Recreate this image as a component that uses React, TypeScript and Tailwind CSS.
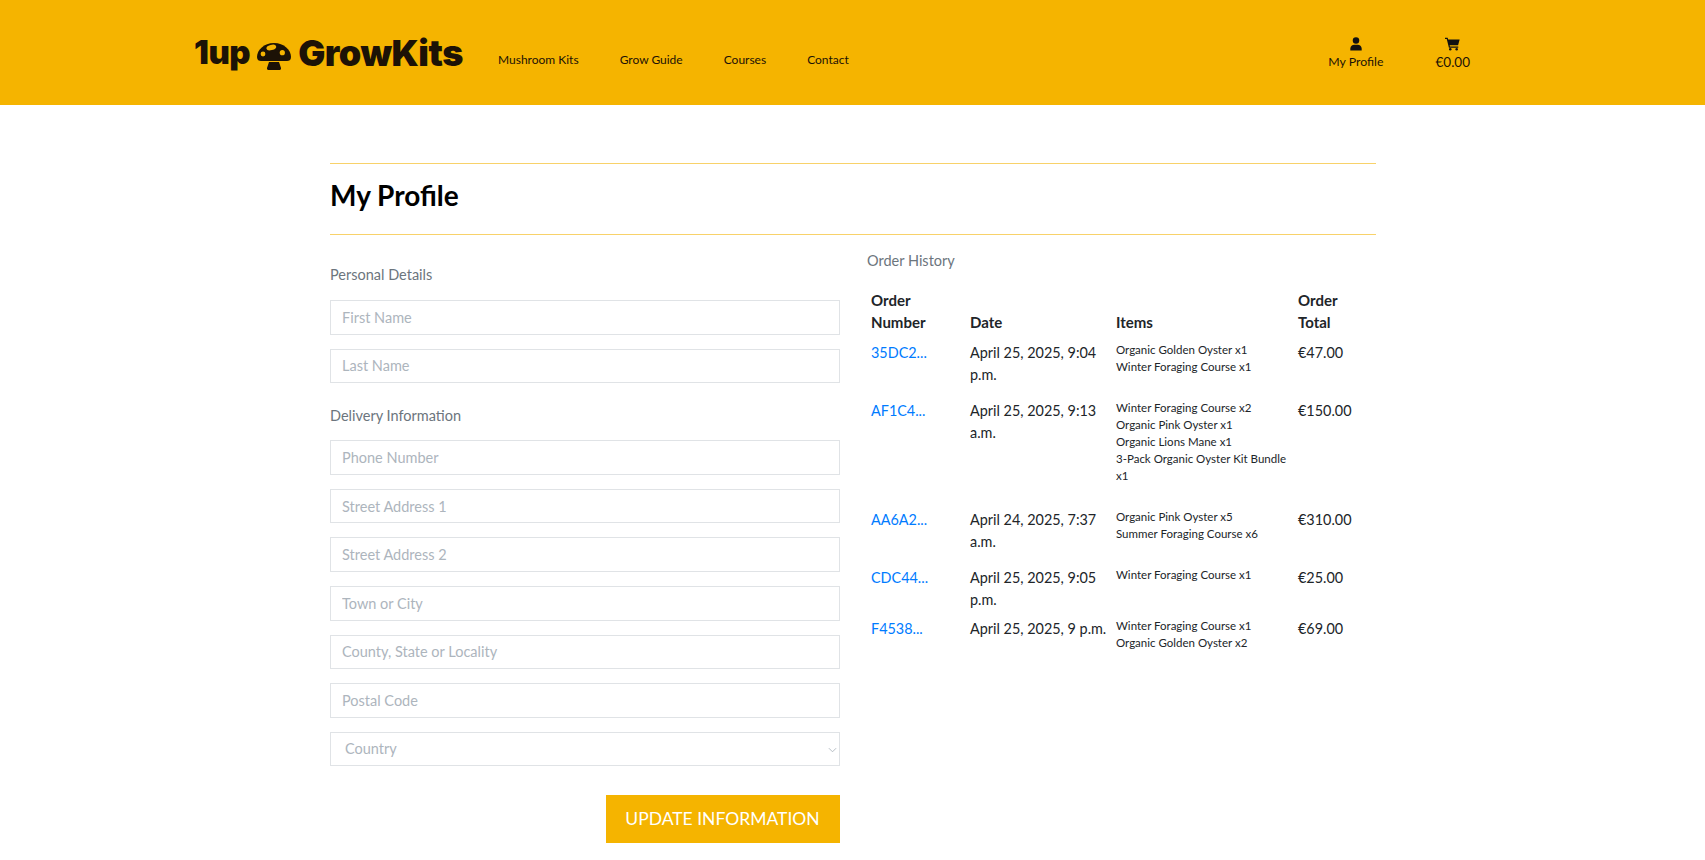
import { ReactNode } from 'react'

const font = "font-['Lato','Liberation_Sans',sans-serif]"

type Order = {
  id: string
  date: string
  items: string[]
  total: string
}

const orders: Order[] = [
  { id: '35DC2...', date: 'April 25, 2025, 9:04 p.m.', items: ['Organic Golden Oyster x1', 'Winter Foraging Course x1'], total: '€47.00' },
  {
    id: 'AF1C4...',
    date: 'April 25, 2025, 9:13 a.m.',
    items: ['Winter Foraging Course x2', 'Organic Pink Oyster x1', 'Organic Lions Mane x1', '3-Pack Organic Oyster Kit Bundle x1'],
    total: '€150.00',
  },
  { id: 'AA6A2...', date: 'April 24, 2025, 7:37 a.m.', items: ['Organic Pink Oyster x5', 'Summer Foraging Course x6'], total: '€310.00' },
  { id: 'CDC44...', date: 'April 25, 2025, 9:05 p.m.', items: ['Winter Foraging Course x1'], total: '€25.00' },
  { id: 'F4538...', date: 'April 25, 2025, 9 p.m.', items: ['Winter Foraging Course x1', 'Organic Golden Oyster x2'], total: '€69.00' },
]

function Mushroom() {
  return (
    <svg viewBox="0 0 34 27" className="mx-[7px] mt-[8px] h-[27px] w-[34px]" aria-hidden="true">
      <path fill="#1c1206" d="M17 0C7 0 0 7 0 14c0 3 2 4 4 4h26c2 0 4-1 4-4C34 7 27 0 17 0Z" />
      <path fill="#1c1206" d="M12 19h10l2 6c.3 1.400-.6 2-2 2H12c-1.400 0-2.300-.6-2-2Z" />
      <ellipse cx="14.300" cy="4.500" rx="5" ry="2.700" transform="rotate(-15 14.300 4.500)" fill="#f5b400" />
      <circle cx="25.300" cy="9.700" r="2.600" fill="#f5b400" />
      <circle cx="6" cy="11" r="2.400" fill="#f5b400" />
    </svg>
  )
}

function NavLink({ children }: { children: ReactNode }) {
  return <a className="text-[12px] leading-[18px] text-[#1c1206]">{children}</a>
}

function Field({ placeholder }: { placeholder: string }) {
  return (
    <input
      type="text"
      placeholder={placeholder}
      className="h-[34.600px] w-full border border-[#e0e3e6] bg-white px-[11px] text-[14.500px] text-[#333] placeholder-[#adb5bd] outline-none"
    />
  )
}

function Header() {
  return (
    <header className="flex h-[105px] items-center bg-[#f5b400] pl-[194px] pr-[235px]">
      <a className="flex w-[269px] shrink-0 items-center font-['Inter',sans-serif] text-[33px] leading-none font-black tracking-[-0.5px] whitespace-nowrap text-[#1c1206]">
        <span>1up</span>
        <Mushroom />
        <span className="text-[36px]">GrowKits</span>
      </a>
      <nav className="ml-[35px] flex items-center gap-[41px] pt-[14px]">
        <NavLink>Mushroom Kits</NavLink>
        <NavLink>Grow Guide</NavLink>
        <NavLink>Courses</NavLink>
        <NavLink>Contact</NavLink>
      </nav>
      <div className="ml-auto flex items-center gap-[52px] pt-[3px] leading-[18px] text-[#1c1206]">
        <a className="flex flex-col items-center text-[12.300px]">
          <svg viewBox="0 0 16 16" className="mb-[2px] h-[14px] w-[14px]" fill="#111" aria-hidden="true">
            <circle cx="8" cy="4" r="3.700" />
            <path d="M1.500 15.500v-2.200C1.500 10.500 3.800 8.800 6 8.800h4c2.200 0 4.500 1.700 4.500 4.500v2.200Z" />
          </svg>
          <span>My Profile</span>
        </a>
        <a className="flex flex-col items-center text-[13.500px]">
          <svg viewBox="0 0 18 16" className="mb-[2px] h-[14px] w-[15px]" fill="#111" aria-hidden="true">
            <path d="M0 .600h3.200l.6 2h13.800l-1.900 7H5.600l.3 1.300h10v1.500H4.700L2.100 2.100H0Z" />
            <circle cx="6.300" cy="14.400" r="1.500" />
            <circle cx="14" cy="14.400" r="1.500" />
          </svg>
          <span>€0.00</span>
        </a>
      </div>
    </header>
  )
}

function ProfileForm() {
  return (
    <div className="w-[509.500px] shrink-0">
      <p className="mt-[29px] mb-[14px] text-[14.500px] leading-[22px] text-[#6c757d]">Personal Details</p>
      <div className="flex flex-col gap-[14px]">
        <Field placeholder="First Name" />
        <Field placeholder="Last Name" />
      </div>
      <p className="mt-[22px] mb-[13px] text-[14.500px] leading-[22px] text-[#6c757d]">Delivery Information</p>
      <div className="flex flex-col gap-[14px]">
        <Field placeholder="Phone Number" />
        <Field placeholder="Street Address 1" />
        <Field placeholder="Street Address 2" />
        <Field placeholder="Town or City" />
        <Field placeholder="County, State or Locality" />
        <Field placeholder="Postal Code" />
        <div className="relative">
          <select className="h-[34.600px] w-full appearance-none border border-[#e0e3e6] bg-white px-[14px] text-[14.500px] text-[#adb5bd] outline-none">
            <option>Country</option>
          </select>
          <svg viewBox="0 0 10 6" className="absolute top-[15px] right-[3px] h-[6px] w-[9px]" fill="none" stroke="#adb5bd" aria-hidden="true">
            <path d="M1 1l4 4 4-4" />
          </svg>
        </div>
      </div>
      <div className="mt-[29px] flex justify-end">
        <button className="h-[48px] w-[234px] bg-[#f5b400] text-[17.500px] text-white">UPDATE INFORMATION</button>
      </div>
    </div>
  )
}

function OrderHistory() {
  return (
    <div className="ml-[27.500px] flex-1">
      <p className="mt-[15px] mb-[13px] text-[14.500px] leading-[22px] text-[#6c757d]">Order History</p>
      <table className="w-full table-fixed border-collapse text-[14.400px] leading-[21.500px] text-[#212529]">
        <colgroup>
          <col className="w-[99px]" />
          <col className="w-[146px]" />
          <col className="w-[182px]" />
          <col />
        </colgroup>
        <thead>
          <tr className="align-bottom text-[15px] leading-[22px] font-bold">
            <th className="p-1 text-left">Order Number</th>
            <th className="p-1 text-left">Date</th>
            <th className="p-1 text-left">Items</th>
            <th className="p-1 text-left">Order Total</th>
          </tr>
        </thead>
        <tbody>
          {orders.map((order) => (
            <tr key={order.id} className="align-top">
              <td className="px-1 pt-[5px] pb-[3px] text-[#007bff]">{order.id}</td>
              <td className="px-1 pt-[5px] pb-[3px]">{order.date}</td>
              <td className="p-1">
                <div className="mb-4 text-[11.500px] leading-[17px]">
                  {order.items.map((item) => (
                    <div key={item}>{item}</div>
                  ))}
                </div>
              </td>
              <td className="px-1 pt-[5px] pb-[3px]">{order.total}</td>
            </tr>
          ))}
        </tbody>
      </table>
    </div>
  )
}

export default function App() {
  return (
    <div className={`h-[860px] overflow-hidden bg-white ${font}`}>
      <Header />
      <main className="mt-[58px] ml-[330px] w-[1046px]">
        <div className="flex h-[72px] items-center border-y border-[#f8d26a] pb-[8px]">
          <h1 className="text-[28px] font-bold text-black">My Profile</h1>
        </div>
        <div className="flex">
          <ProfileForm />
          <OrderHistory />
        </div>
      </main>
    </div>
  )
}
